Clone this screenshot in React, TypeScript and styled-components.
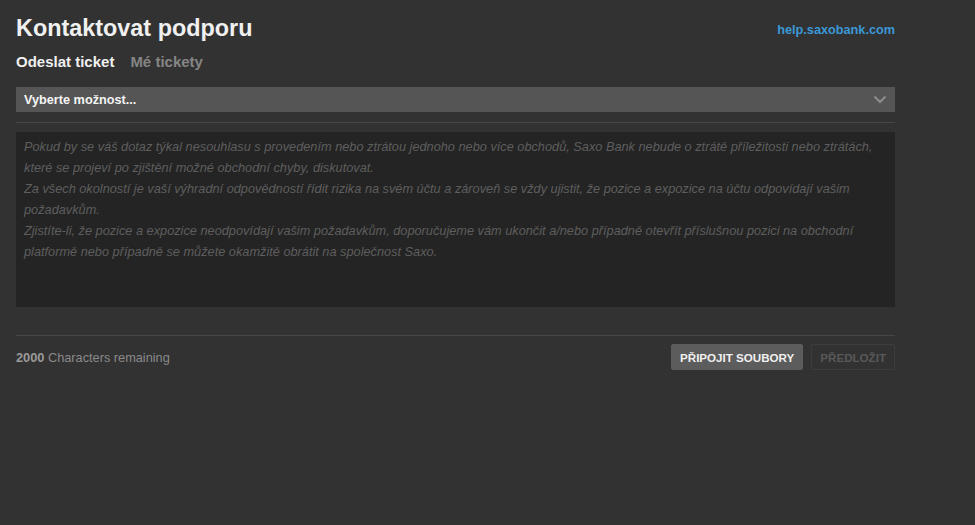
import React from "react";
import styled, { createGlobalStyle } from "styled-components";

const Global = createGlobalStyle`
  html, body {
    margin: 0;
    padding: 0;
    background: #323232;
    font-family: "Liberation Sans", Arial, sans-serif;
  }
`;

const Page = styled.div`
  width: 879px;
  padding: 14px 0 0 16px;
  display: flex;
  flex-direction: column;
`;

const Header = styled.div`
  display: flex;
  justify-content: space-between;
  align-items: center;
  height: 28px;
`;

const Title = styled.h1`
  margin: 0;
  font-size: 23.4px;
  font-weight: bold;
  color: #f0f0f0;
`;

const HelpLink = styled.a`
  color: #3b98d6;
  font-size: 12.7px;
  font-weight: bold;
  text-decoration: none;
  margin-top: 4px;
`;

const Tabs = styled.div`
  display: flex;
  gap: 16px;
  margin-top: 11px;
  height: 16px;
  align-items: center;
`;

const Tab = styled.span<{ $active?: boolean }>`
  font-size: 15px;
  font-weight: bold;
  color: ${(p) => (p.$active ? "#f0f0f0" : "#858585")};
`;

const Select = styled.div`
  margin-top: 18px;
  height: 25px;
  background: #555555;
  display: flex;
  align-items: center;
  justify-content: space-between;
  padding: 0 8px;
  box-sizing: border-box;
  font-size: 12.7px;
  font-weight: bold;
  color: #f5f5f5;
`;

const Divider = styled.div<{ $top: number }>`
  margin-top: ${(p) => p.$top}px;
  height: 1px;
  background: #474747;
`;

const TextArea = styled.div`
  margin-top: 9px;
  height: 175px;
  background: #242424;
  padding: 4px 8px;
  box-sizing: border-box;
  font-size: 12.75px;
  font-style: italic;
  line-height: 21px;
  color: #5e5e5e;
`;

const Footer = styled.div`
  margin-top: 8px;
  display: flex;
  justify-content: space-between;
  align-items: center;
`;

const Counter = styled.span`
  font-size: 12.75px;
  color: #8a8a8a;
  b {
    color: #9a9a9a;
  }
`;

const Buttons = styled.div`
  display: flex;
  gap: 8px;
`;

const Button = styled.button<{ $disabled?: boolean }>`
  height: 26px;
  padding: 0 8px;
  font-family: "Liberation Sans", Arial, sans-serif;
  font-size: 11.6px;
  font-weight: bold;
  border-radius: 2px;
  border: 1px solid ${(p) => (p.$disabled ? "#3d3d3d" : "#5c5c5c")};
  background: ${(p) => (p.$disabled ? "transparent" : "#5c5c5c")};
  color: ${(p) => (p.$disabled ? "#595959" : "#f0f0f0")};
  cursor: pointer;
`;

export default function App() {
  return (
    <>
      <Global />
      <Page>
        <Header>
          <Title>Kontaktovat podporu</Title>
          <HelpLink href="#">help.saxobank.com</HelpLink>
        </Header>
        <Tabs>
          <Tab $active>Odeslat ticket</Tab>
          <Tab>Mé tickety</Tab>
        </Tabs>
        <Select>
          <span>Vyberte možnost...</span>
          <svg width="14" height="9" viewBox="0 0 14 9">
            <path d="M1.5 1.5 L7 7 L12.5 1.5" fill="none" stroke="#8c8c8c" strokeWidth="2" />
          </svg>
        </Select>
        <Divider $top={10} />
        <TextArea>
          Pokud by se váš dotaz týkal nesouhlasu s provedením nebo ztrátou jednoho nebo více obchodů, Saxo Bank nebude o ztrátě příležitosti nebo ztrátách, které se projeví po zjištění možné obchodní chyby, diskutovat.
          <br />
          Za všech okolností je vaší výhradní odpovědností řídit rizika na svém účtu a zároveň se vždy ujistit, že pozice a expozice na účtu odpovídají vašim požadavkům.
          <br />
          Zjistíte-li, že pozice a expozice neodpovídají vašim požadavkům, doporučujeme vám ukončit a/nebo případně otevřít příslušnou pozici na obchodní platformě nebo případně se můžete okamžitě obrátit na společnost Saxo.
        </TextArea>
        <Divider $top={28} />
        <Footer>
          <Counter>
            <b>2000</b> Characters remaining
          </Counter>
          <Buttons>
            <Button>PŘIPOJIT SOUBORY</Button>
            <Button $disabled>PŘEDLOŽIT</Button>
          </Buttons>
        </Footer>
      </Page>
    </>
  );
}
